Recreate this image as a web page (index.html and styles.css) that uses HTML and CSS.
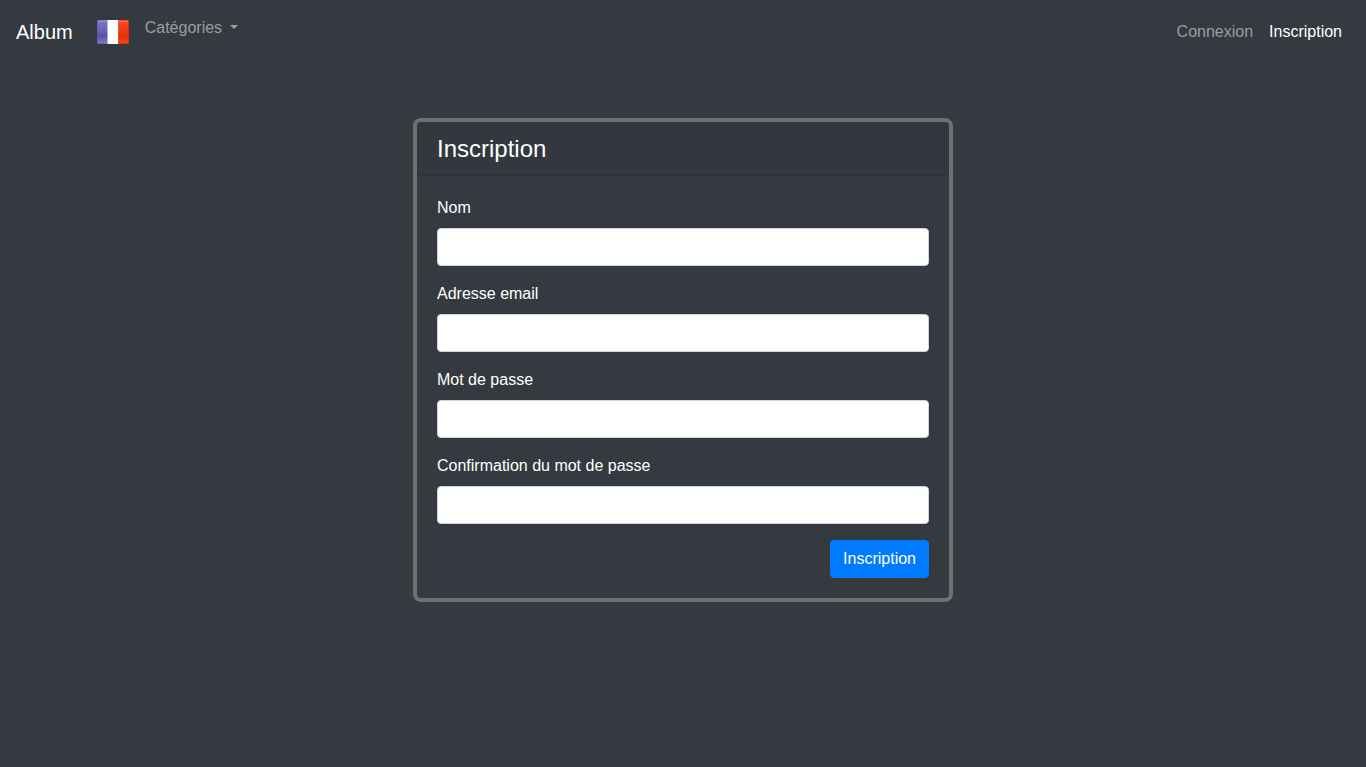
FILE: index.html
```html
<!DOCTYPE html>
<html lang="fr">
<head>
<meta charset="utf-8">
<meta name="viewport" content="width=device-width, initial-scale=1">
<title>Album</title>
<link rel="stylesheet" href="styles.css">
</head>
<body>
<nav class="navbar">
  <a class="navbar-brand" href="#">Album</a>
  <ul class="navbar-nav navbar-main">
    <li>
      <a class="nav-link" href="#" aria-label="Français">
        <svg class="flag" viewBox="0 0 32 32" aria-hidden="true">
          <defs>
            <linearGradient id="blue" x1="0" y1="0" x2="0" y2="1">
              <stop offset="0" stop-color="#7d78c6"/>
              <stop offset=".5" stop-color="#6660b4"/>
              <stop offset=".65" stop-color="#574fa8"/>
              <stop offset="1" stop-color="#8680cc"/>
            </linearGradient>
            <linearGradient id="red" x1="0" y1="0" x2="0" y2="1">
              <stop offset="0" stop-color="#fa4a22"/>
              <stop offset=".45" stop-color="#f03a14"/>
              <stop offset=".7" stop-color="#ee2c08"/>
              <stop offset="1" stop-color="#fb4c10"/>
            </linearGradient>
            <clipPath id="edge"><rect x="0" y="4" width="32" height="24" rx="1"/></clipPath>
          </defs>
          <g clip-path="url(#edge)">
            <rect x="0" y="4" width="11" height="24" fill="url(#blue)"/>
            <rect x="10.5" y="4" width="11" height="24" fill="#fff"/>
            <rect x="21.3" y="4" width="10.7" height="24" fill="url(#red)"/>
            <path d="M1.5 5.5H10" stroke="#938fd4" fill="none"/>
            <path d="M22 5.5H30.5" stroke="#ff7350" fill="none"/>
            <path d="M.5 4V28M0 27.5H10.5" stroke="#5a549f" stroke-opacity=".6" fill="none"/>
            <path d="M31.5 4V28M21.5 27.5H32" stroke="#c92c08" stroke-opacity=".6" fill="none"/>
          </g>
        </svg>
      </a>
    </li>
    <li><a class="nav-link dropdown-toggle" href="#">Catégories</a></li>
  </ul>
  <ul class="navbar-nav">
    <li><a class="nav-link" href="#">Connexion</a></li>
    <li><a class="nav-link active" href="#">Inscription</a></li>
  </ul>
</nav>
<main class="container">
  <section class="card">
    <h1 class="card-header">Inscription</h1>
    <form class="card-body">
      <div class="form-group">
        <label for="name">Nom</label>
        <input class="form-control" id="name" name="name" type="text">
      </div>
      <div class="form-group">
        <label for="email">Adresse email</label>
        <input class="form-control" id="email" name="email" type="email">
      </div>
      <div class="form-group">
        <label for="password">Mot de passe</label>
        <input class="form-control" id="password" name="password" type="password">
      </div>
      <div class="form-group">
        <label for="password-confirm">Confirmation du mot de passe</label>
        <input class="form-control" id="password-confirm" name="password_confirmation" type="password">
      </div>
      <button class="btn" type="submit">Inscription</button>
    </form>
  </section>
</main>
</body>
</html>
```
FILE: styles.css
```css
*,
*::before,
*::after {
  box-sizing: border-box;
}

body {
  margin: 0;
  background: #343a40;
  color: #fff;
  font-family: "Liberation Sans", Arial, sans-serif;
  font-size: 16px;
  line-height: 24px;
}

.navbar {
  display: flex;
  align-items: center;
  padding: 8px 16px;
}

.navbar-brand {
  margin-right: 16px;
  color: #fff;
  font-size: 20px;
  line-height: 30px;
  text-decoration: none;
}

.navbar-nav {
  display: flex;
  margin: 0;
  padding: 0;
  list-style: none;
}

.navbar-main {
  flex: 1;
}

.nav-link {
  display: block;
  padding: 8px;
  color: rgba(255, 255, 255, 0.5);
  text-decoration: none;
}

.nav-link.active {
  color: #fff;
}

.dropdown-toggle::after {
  content: "";
  display: inline-block;
  margin-left: 8px;
  vertical-align: 4px;
  border-top: 4px solid;
  border-right: 4px solid transparent;
  border-left: 4px solid transparent;
}

.flag {
  display: block;
  width: 32px;
  height: 32px;
}

.container {
  padding: 54px 16px 24px;
}

.card {
  max-width: 540px;
  margin: 0 auto;
  border: 4px solid #6f7073;
  border-radius: 8px;
}

.card-header {
  margin: 0;
  padding: 12px 20px;
  border-bottom: 1px solid rgba(0, 0, 0, 0.125);
  background: rgba(0, 0, 0, 0.03);
  font-size: 24px;
  font-weight: 400;
  line-height: 29px;
}

.card-body {
  display: flex;
  flex-direction: column;
  gap: 16px;
  padding: 20px;
}

.form-group {
  display: flex;
  flex-direction: column;
  gap: 8px;
}

.form-control {
  width: 100%;
  height: 38px;
  padding: 6px 12px;
  border: 1px solid #ced4da;
  border-radius: 4px;
  background: #fff;
  color: #495057;
  font: inherit;
}

.btn {
  align-self: flex-end;
  padding: 6px 12px;
  border: 1px solid #007bff;
  border-radius: 4px;
  background: #007bff;
  color: #fff;
  font: inherit;
  cursor: pointer;
}
```
